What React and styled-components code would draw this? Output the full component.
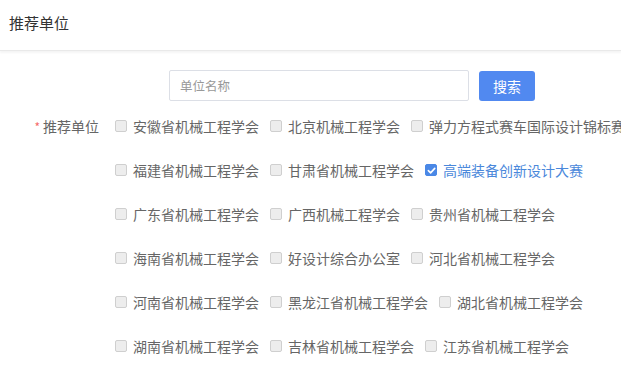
import React, { useState } from "react";
import styled, { createGlobalStyle } from "styled-components";

const GlobalStyle = createGlobalStyle`
  html, body {
    margin: 0;
    padding: 0;
    background: #fff;
    font-family: "Noto Sans CJK SC", "Liberation Sans", sans-serif;
    overflow: hidden;
  }
`;

const Page = styled.div`
  width: 621px;
  height: 371px;
  overflow: hidden;
  background: #fff;
`;

const Header = styled.div`
  height: 51px;
  padding: 12px 0 0 9px;
  box-sizing: border-box;
  font-size: 15px;
  color: #333;
  border-bottom: 1px solid #e9e9e9;
  box-shadow: 0 2px 2px rgba(0, 0, 0, 0.045);
`;

const SearchBar = styled.div`
  display: flex;
  align-items: center;
  gap: 10px;
  padding: 19px 0 0 169px;
`;

const SearchInput = styled.input`
  width: 300px;
  height: 31px;
  box-sizing: border-box;
  border: 1px solid #dcdfe6;
  border-radius: 2px;
  padding: 0 10px;
  font-family: inherit;
  font-size: 12.5px;
  color: #333;
  outline: none;
  &::placeholder {
    color: #999;
  }
`;

const SearchButton = styled.button`
  width: 56px;
  height: 30px;
  border: none;
  border-radius: 3px;
  background: #5189f0;
  color: #fff;
  font-family: inherit;
  font-size: 14px;
  cursor: pointer;
`;

const FormArea = styled.div`
  display: grid;
  grid-template-columns: 115px 1fr;
  padding-top: 3px;
`;

const FieldLabel = styled.div`
  height: 44px;
  display: flex;
  align-items: center;
  justify-content: flex-end;
  padding-right: 16px;
  font-size: 14px;
  color: #666;
`;

const Star = styled.span`
  color: #f56c6c;
  font-size: 12px;
  margin-right: 3px;
`;

const Options = styled.div`
  display: flex;
  flex-direction: column;
`;

const OptionRow = styled.div`
  height: 44px;
  display: flex;
  align-items: center;
  white-space: nowrap;
`;

const Option = styled.label`
  display: inline-flex;
  align-items: center;
  margin-right: 11px;
  font-size: 14px;
  color: ${(p) => (p.$checked ? "#4a88db" : "#666")};
  cursor: pointer;
`;

const Box = styled.span`
  width: 12px;
  height: 12px;
  box-sizing: border-box;
  border-radius: 2px;
  margin-right: 6px;
  display: inline-flex;
  align-items: center;
  justify-content: center;
  flex-shrink: 0;
  background: ${(p) => (p.$checked ? "#4a88e6" : "#ededed")};
  border: 1px solid ${(p) => (p.$checked ? "#4a88e6" : "#cfcfcf")};
`;

const rows = [
  ["安徽省机械工程学会", "北京机械工程学会", "弹力方程式赛车国际设计锦标赛"],
  ["福建省机械工程学会", "甘肃省机械工程学会", "高端装备创新设计大赛"],
  ["广东省机械工程学会", "广西机械工程学会", "贵州省机械工程学会"],
  ["海南省机械工程学会", "好设计综合办公室", "河北省机械工程学会"],
  ["河南省机械工程学会", "黑龙江省机械工程学会", "湖北省机械工程学会"],
  ["湖南省机械工程学会", "吉林省机械工程学会", "江苏省机械工程学会"],
];

const App = () => {
  const [checked, setChecked] = useState({ 高端装备创新设计大赛: true });

  const toggle = (name) => setChecked({ ...checked, [name]: !checked[name] });

  return (
    <Page>
      <GlobalStyle />
      <Header>推荐单位</Header>
      <SearchBar>
        <SearchInput placeholder="单位名称" />
        <SearchButton>搜索</SearchButton>
      </SearchBar>
      <FormArea>
        <div>
          <FieldLabel>
            <Star>*</Star>推荐单位
          </FieldLabel>
        </div>
        <Options>
          {rows.map((row, i) => (
            <OptionRow key={i}>
              {row.map((name) => (
                <Option
                  key={name}
                  $checked={!!checked[name]}
                  onClick={() => toggle(name)}
                >
                  <Box $checked={!!checked[name]}>
                    {checked[name] && (
                      <svg width="9" height="9" viewBox="0 0 10 10">
                        <path
                          d="M1.5 5.2 L4 7.6 L8.6 2.6"
                          fill="none"
                          stroke="#fff"
                          strokeWidth="1.8"
                          strokeLinecap="round"
                          strokeLinejoin="round"
                        />
                      </svg>
                    )}
                  </Box>
                  {name}
                </Option>
              ))}
            </OptionRow>
          ))}
        </Options>
      </FormArea>
    </Page>
  );
};

export default App;
